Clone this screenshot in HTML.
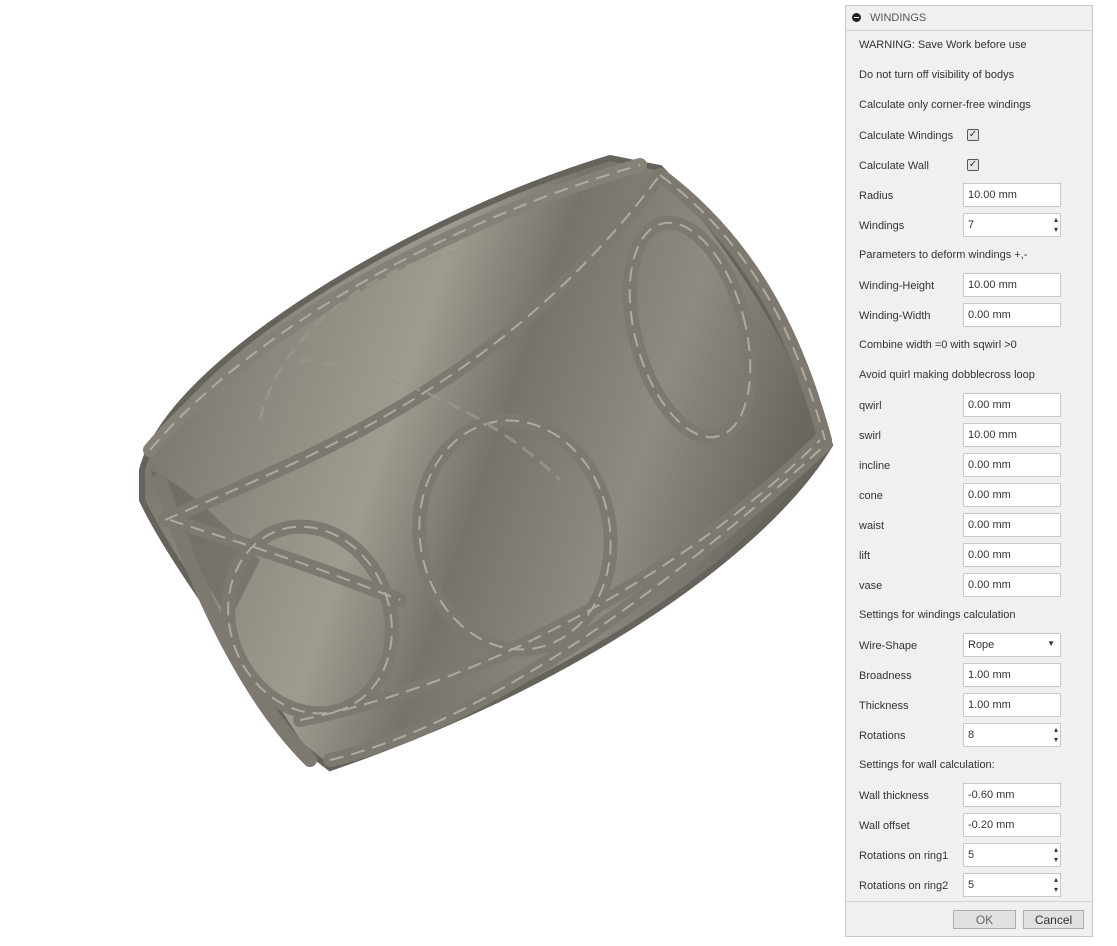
<!DOCTYPE html>
<html><head><style>
body{margin:0;width:1117px;height:946px;background:#fff;position:relative;overflow:hidden;font-family:"Liberation Sans",Arial,sans-serif;font-size:11px;color:#333}
.p{position:absolute;left:845px;top:5px;width:248px;height:932px;background:#f0f0f0;border:1px solid #c9c9c9;box-sizing:border-box}
.h{position:absolute;left:0;top:0;width:100%;height:24px;border-bottom:1px solid #d2d2d2;color:#555}
.h span{position:absolute;left:24px;top:6px}
.h i{position:absolute;left:6px;top:7px;width:9px;height:9px;border-radius:50%;background:#222}
.h i:after{content:"";position:absolute;left:2px;top:4px;width:5px;height:1px;background:#fff}
.l{position:absolute;left:13px}
.in{position:absolute;left:117px;width:98px;height:24px;background:#fff;border:1px solid #c8c8c8;box-sizing:border-box;padding:5px 0 0 4px}
.sp:after{content:"▴\A▾";white-space:pre;position:absolute;right:2px;top:1px;font-size:8px;line-height:10px;color:#333}
.cb{position:absolute;left:121px;width:12px;height:12px;border:1px solid #555;border-radius:2px;background:#e4e4e4;box-sizing:border-box;font-size:10px;line-height:10px;text-align:center}
.f{position:absolute;left:0;top:895px;width:100%;border-top:1px solid #d2d2d2}
.b{position:absolute;top:904px;height:19px;border:1px solid #adadad;background:#e1e1e1;box-sizing:border-box;text-align:center;font-size:12px;padding-top:2px}
</style></head><body>
<svg width="845" height="946" style="position:absolute;left:0;top:0">
<defs><linearGradient id="g" x1="0" y1="0" x2="1" y2="0.3">
<stop offset="0" stop-color="#6a6761"/><stop offset="0.25" stop-color="#8a867d"/><stop offset="0.45" stop-color="#a09b90"/><stop offset="0.6" stop-color="#77736c"/><stop offset="0.8" stop-color="#8f8b83"/><stop offset="1" stop-color="#6a6761"/></linearGradient></defs>
<path d="M142,470 C170,360 420,215 610,158 L660,168 C720,230 790,330 830,445 C760,560 560,690 330,768 L300,745 C240,650 170,560 142,500 Z" fill="url(#g)" stroke="#66635d" stroke-width="6"/>
<path d="M150,470 C170,520 190,560 230,620 L260,560 C200,500 175,480 150,470Z" fill="#5f5c57" opacity=".5"/>
<g fill="none" stroke="#7d7970" stroke-width="14" stroke-linecap="round">
<path d="M150,450 C250,330 450,220 640,165" stroke="#858179"/>
<path d="M165,520 C300,460 500,390 660,175"/>
<path d="M170,520 C230,540 300,560 400,600"/>
<path d="M330,760 C500,720 700,560 825,445"/>
<path d="M300,720 C500,680 700,560 820,440"/>
<path d="M660,175 C760,250 800,350 825,440"/>
<ellipse cx="515" cy="535" rx="95" ry="115" transform="rotate(-10 515 535)"/>
<ellipse cx="690" cy="330" rx="55" ry="110" transform="rotate(-15 690 330)"/>
<ellipse cx="310" cy="620" rx="80" ry="95" transform="rotate(-20 310 620)"/>
<path d="M160,480 C200,600 250,700 310,760"/>
</g>
<g fill="none" stroke="#b8b3a8" stroke-width="2" stroke-dasharray="14 8" opacity=".85">
<path d="M150,450 C250,330 450,220 640,165"/><path d="M165,520 C300,460 500,390 660,175"/><path d="M330,760 C500,720 700,560 825,445"/><path d="M300,720 C500,680 700,560 820,440"/>
<path d="M660,175 C760,250 800,350 825,440"/>
<ellipse cx="515" cy="535" rx="95" ry="115" transform="rotate(-10 515 535)"/>
<ellipse cx="690" cy="330" rx="55" ry="110" transform="rotate(-15 690 330)"/>
<ellipse cx="310" cy="620" rx="80" ry="95" transform="rotate(-20 310 620)"/>
<path d="M170,520 C230,540 300,560 400,600"/>
<path d="M260,420 C280,330 380,260 470,250 M300,360 C400,370 500,420 560,480" stroke="#9a958b" stroke-width="3"/>
</g>
</svg>
<div class="p">
<div class="h"><i></i><span>WINDINGS</span></div>
<div class="l" style="top:33px">WARNING: Save Work before use</div>
<div class="l" style="top:63px">Do not turn off visibility of bodys</div>
<div class="l" style="top:93px">Calculate only corner-free windings</div>
<div class="l" style="top:124px">Calculate Windings</div><div class="cb" style="top:123px">✓</div>
<div class="l" style="top:154px">Calculate Wall</div><div class="cb" style="top:153px">✓</div>
<div class="l" style="top:184px">Radius</div><div class="in" style="top:177px">10.00 mm</div>
<div class="l" style="top:214px">Windings</div><div class="in sp" style="top:207px">7</div>
<div class="l" style="top:243px">Parameters to deform windings +,-</div>
<div class="l" style="top:274px">Winding-Height</div><div class="in" style="top:267px">10.00 mm</div>
<div class="l" style="top:304px">Winding-Width</div><div class="in" style="top:297px">0.00 mm</div>
<div class="l" style="top:333px">Combine width =0 with sqwirl &gt;0</div>
<div class="l" style="top:363px">Avoid quirl making dobblecross loop</div>
<div class="l" style="top:394px">qwirl</div><div class="in" style="top:387px">0.00 mm</div>
<div class="l" style="top:424px">swirl</div><div class="in" style="top:417px">10.00 mm</div>
<div class="l" style="top:454px">incline</div><div class="in" style="top:447px">0.00 mm</div>
<div class="l" style="top:484px">cone</div><div class="in" style="top:477px">0.00 mm</div>
<div class="l" style="top:514px">waist</div><div class="in" style="top:507px">0.00 mm</div>
<div class="l" style="top:544px">lift</div><div class="in" style="top:537px">0.00 mm</div>
<div class="l" style="top:574px">vase</div><div class="in" style="top:567px">0.00 mm</div>
<div class="l" style="top:603px">Settings for windings calculation</div>
<div class="l" style="top:634px">Wire-Shape</div><div class="in" style="top:627px">Rope<span style="position:absolute;right:5px;top:5px;font-size:8px">▼</span></div>
<div class="l" style="top:664px">Broadness</div><div class="in" style="top:657px">1.00 mm</div>
<div class="l" style="top:694px">Thickness</div><div class="in" style="top:687px">1.00 mm</div>
<div class="l" style="top:724px">Rotations</div><div class="in sp" style="top:717px">8</div>
<div class="l" style="top:753px">Settings for wall calculation:</div>
<div class="l" style="top:784px">Wall thickness</div><div class="in" style="top:777px">-0.60 mm</div>
<div class="l" style="top:814px">Wall offset</div><div class="in" style="top:807px">-0.20 mm</div>
<div class="l" style="top:844px">Rotations on ring1</div><div class="in sp" style="top:837px">5</div>
<div class="l" style="top:874px">Rotations on ring2</div><div class="in sp" style="top:867px">5</div>
<div class="f"></div>
<div class="b" style="left:107px;width:63px;color:#666">OK</div>
<div class="b" style="left:177px;width:61px">Cancel</div>
</div>
</body></html>
